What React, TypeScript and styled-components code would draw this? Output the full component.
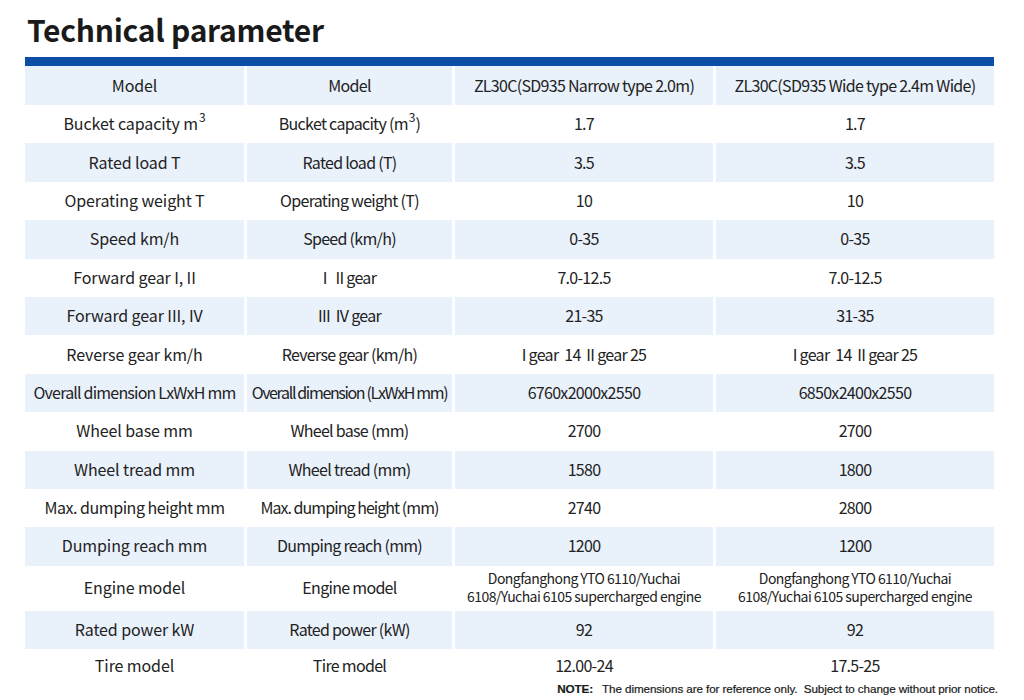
import React from "react";
import styled, { createGlobalStyle } from "styled-components";

const Global = createGlobalStyle`
  html, body { margin: 0; padding: 0; background: #ffffff; }
  body { font-family: "Noto Sans CJK SC", "Noto Sans", sans-serif; color: #222222; }
`;

const Page = styled.div`
  width: 1024px;
  height: 700px;
  overflow: hidden;
  background: #ffffff;
`;

const Title = styled.h1`
  margin: 0;
  height: 57px;
  box-sizing: border-box;
  padding: 10px 0 0 27px;
  font-family: "Noto Sans CJK SC", sans-serif;
  font-weight: 700;
  font-size: 30px;
  line-height: 38px;
  color: #1a1a1a;
  letter-spacing: -0.25px;
`;

const Table = styled.div`
  margin-left: 25px;
  width: 969px;
`;

const BlueBar = styled.div`
  height: 9px;
  background: #0b4ea6;
`;

const Row = styled.div<{ $h: number }>`
  display: grid;
  grid-template-columns: 219px 205px 258px 278px;
  column-gap: 3px;
  height: ${(p) => p.$h}px;
`;

const Cell = styled.div<{ $shaded: boolean; $tight: boolean }>`
  display: flex;
  align-items: center;
  justify-content: center;
  text-align: center;
  padding-bottom: 2px;
  box-sizing: border-box;
  background: ${(p) => (p.$shaded ? "#e9f1fb" : "#ffffff")};
  font-size: 16px;
  line-height: 20px;
  letter-spacing: ${(p) => (p.$tight ? "-0.7px" : "-0.1px")};
  color: #222222;
  white-space: pre;
`;

const Squeeze = styled.span<{ $ls: number }>`
  letter-spacing: ${(p) => p.$ls}px;
`;

const Small = styled.span`
  font-size: 14px;
  line-height: 18px;
  letter-spacing: -0.55px;
  white-space: normal;
`;

const Note = styled.div`
  text-align: right;
  padding-right: 26px;
  font-family: "Liberation Sans", Arial, sans-serif;
  font-size: 11.7px;
  line-height: 12px;
  color: #1a1a1a;
  letter-spacing: -0.1px;
  -webkit-text-stroke: 0.2px #1a1a1a;
`;

const NoteLabel = styled.b`
  font-weight: 700;
  margin-right: 9px;
`;

type R = { c: React.ReactNode[]; h?: number };

const Sup = styled.span`
  display: inline-block;
  font-size: 12px;
  line-height: 12px;
  position: relative;
  top: -6px;
  margin-left: 1px;
  letter-spacing: 0;
`;

const rows: R[] = [
  { c: ["Model", "Model", "ZL30C(SD935 Narrow type 2.0m)", "ZL30C(SD935 Wide type 2.4m Wide)"], h: 39 },
  { c: [<>Bucket capacity m<Sup>3</Sup></>, <>Bucket capacity (m<Sup>3</Sup>)</>, "1.7", "1.7"] },
  { c: ["Rated load T", "Rated load (T)", "3.5", "3.5"] },
  { c: ["Operating weight T", "Operating weight (T)", "10", "10"] },
  { c: ["Speed km/h", "Speed (km/h)", "0-35", "0-35"] },
  { c: ["Forward gear I, II", "I   II gear", "7.0-12.5", "7.0-12.5"] },
  { c: ["Forward gear III, IV", "III  IV gear", "21-35", "31-35"] },
  { c: ["Reverse gear km/h", "Reverse gear (km/h)", "I gear  14  II gear 25", "I gear  14  II gear 25"] },
  {
    c: [
      <Squeeze $ls={-0.8}>Overall dimension LxWxH mm</Squeeze>,
      <Squeeze $ls={-1.35}>Overall dimension (LxWxH mm)</Squeeze>,
      "6760x2000x2550",
      "6850x2400x2550",
    ],
  },
  { c: ["Wheel base mm", "Wheel base (mm)", "2700", "2700"] },
  { c: ["Wheel tread mm", "Wheel tread (mm)", "1580", "1800"] },
  {
    c: [
      <Squeeze $ls={-0.45}>Max. dumping height mm</Squeeze>,
      <Squeeze $ls={-0.95}>Max. dumping height (mm)</Squeeze>,
      "2740",
      "2800",
    ],
  },
  { c: ["Dumping reach mm", "Dumping reach (mm)", "1200", "1200"] },
  {
    c: [
      "Engine model",
      "Engine model",
      <Small>Dongfanghong YTO 6110/Yuchai<br />6108/Yuchai 6105 supercharged engine</Small>,
      <Small>Dongfanghong YTO 6110/Yuchai<br />6108/Yuchai 6105 supercharged engine</Small>,
    ],
    h: 45.2,
  },
  { c: ["Rated power kW", "Rated power (kW)", "92", "92"] },
  { c: ["Tire model", "Tire model", "12.00-24", "17.5-25"], h: 34 },
];

export default function App() {
  return (
    <Page>
      <Global />
      <Title>Technical parameter</Title>
      <Table>
        <BlueBar />
        {rows.map((r, i) => (
          <Row key={i} $h={r.h ?? 38.4}>
            {r.c.map((c, j) => (
              <Cell key={j} $shaded={i % 2 === 0} $tight={j > 0}>
                {c}
              </Cell>
            ))}
          </Row>
        ))}
      </Table>
      <Note>
        <NoteLabel>NOTE:</NoteLabel>The dimensions are for reference only.&nbsp; Subject to change without prior notice.
      </Note>
    </Page>
  );
}
